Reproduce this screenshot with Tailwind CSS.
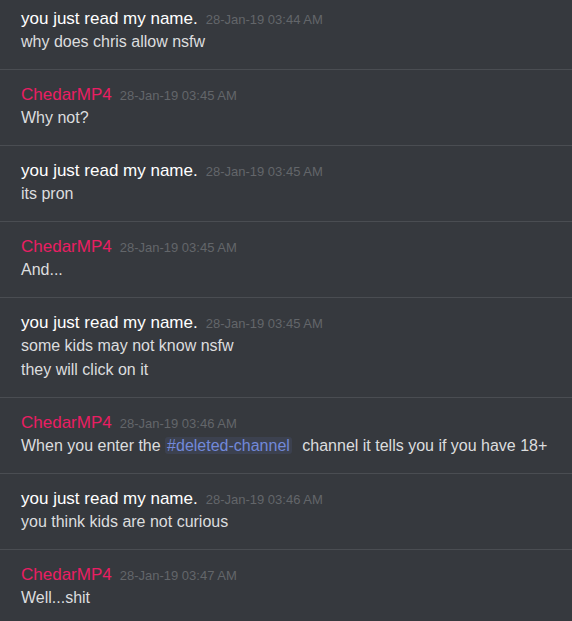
<!DOCTYPE html>
<html lang="en">
<head>
<meta charset="utf-8">
<meta name="viewport" content="width=device-width, initial-scale=1">
<title>Chat log</title>
<script src="https://cdn.jsdelivr.net/npm/@tailwindcss/browser@4"></script>
</head>
<body class="bg-[#36393e] font-['Liberation_Sans',Arial,sans-serif] text-base leading-6 text-[#dcddde]">
<main class="divide-y divide-[#4a4d52]">
  <article class="px-[21px] pt-[9px] pb-[15px]">
    <header class="flex items-baseline gap-2 leading-5"><h2 class="text-[17px] text-white">you just read my name.</h2><time class="text-[13px] text-[#63666a]">28-Jan-19 03:44 AM</time></header>
    <p>why does chris allow nsfw</p>
  </article>
  <article class="px-[21px] py-[15px]">
    <header class="flex items-baseline gap-2 leading-5"><h2 class="text-[17px] text-[#e91e63]">ChedarMP4</h2><time class="text-[13px] text-[#63666a]">28-Jan-19 03:45 AM</time></header>
    <p>Why not?</p>
  </article>
  <article class="px-[21px] py-[15px]">
    <header class="flex items-baseline gap-2 leading-5"><h2 class="text-[17px] text-white">you just read my name.</h2><time class="text-[13px] text-[#63666a]">28-Jan-19 03:45 AM</time></header>
    <p>its pron</p>
  </article>
  <article class="px-[21px] py-[15px]">
    <header class="flex items-baseline gap-2 leading-5"><h2 class="text-[17px] text-[#e91e63]">ChedarMP4</h2><time class="text-[13px] text-[#63666a]">28-Jan-19 03:45 AM</time></header>
    <p>And...</p>
  </article>
  <article class="px-[21px] py-[15px]">
    <header class="flex items-baseline gap-2 leading-5"><h2 class="text-[17px] text-white">you just read my name.</h2><time class="text-[13px] text-[#63666a]">28-Jan-19 03:45 AM</time></header>
    <p>some kids may not know nsfw</p>
    <p>they will click on it</p>
  </article>
  <article class="px-[21px] py-[15px]">
    <header class="flex items-baseline gap-2 leading-5"><h2 class="text-[17px] text-[#e91e63]">ChedarMP4</h2><time class="text-[13px] text-[#63666a]">28-Jan-19 03:46 AM</time></header>
    <p>When you enter the <a href="#deleted-channel" class="mr-1.5 rounded-[3px] bg-[#3c414f] px-0.5 text-[#7289da]">#deleted-channel</a> channel it tells you if you have 18+</p>
  </article>
  <article class="px-[21px] py-[15px]">
    <header class="flex items-baseline gap-2 leading-5"><h2 class="text-[17px] text-white">you just read my name.</h2><time class="text-[13px] text-[#63666a]">28-Jan-19 03:46 AM</time></header>
    <p>you think kids are not curious</p>
  </article>
  <article class="px-[21px] pt-[15px] pb-3">
    <header class="flex items-baseline gap-2 leading-5"><h2 class="text-[17px] text-[#e91e63]">ChedarMP4</h2><time class="text-[13px] text-[#63666a]">28-Jan-19 03:47 AM</time></header>
    <p>Well...shit</p>
  </article>
</main>
</body>
</html>
